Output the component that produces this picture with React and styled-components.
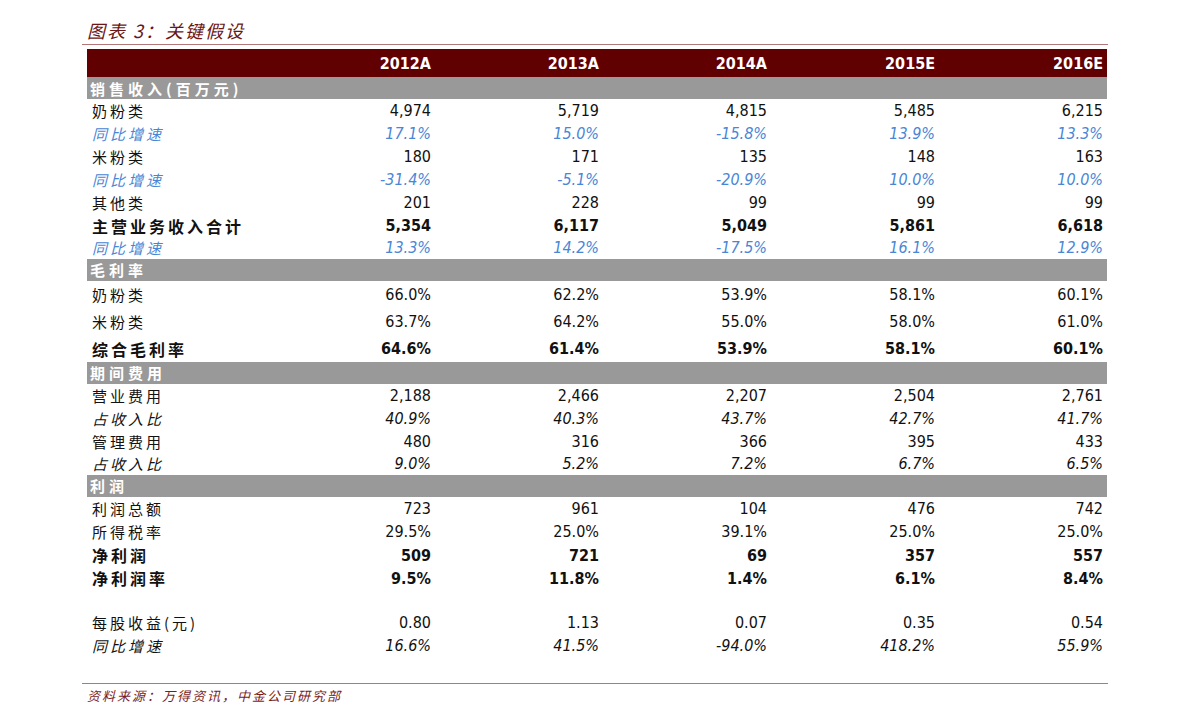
import React from "react";
import styled, { createGlobalStyle } from "styled-components";

const GlobalStyle = createGlobalStyle`
  body {
    margin: 0;
    background: #ffffff;
  }
`;

const Page = styled.div`
  width: 1026px;
  padding: 17px 0 0 82px;
  font-family: "DejaVu Sans Condensed", "DejaVu Sans", sans-serif;
`;

const Title = styled.div`
  height: 27px;
  padding-left: 5px;
  font-family: "Noto Sans CJK SC", sans-serif;
  font-style: italic;
  font-size: 18px;
  line-height: 27px;
  letter-spacing: 2px;
  color: #6b1616;
  border-bottom: 1px solid #b27878;
`;

const Table = styled.div`
  margin: 4px 0 0 5px;
  width: 1020px;
`;

const Row = styled.div`
  display: grid;
  grid-template-columns: 180px repeat(5, 168px);
  align-items: center;
  padding-top: ${(p) => (p.$bg ? 0 : 1)}px;
  box-sizing: border-box;
  height: ${(p) => p.$h || 22.8}px;
  background: ${(p) => p.$bg || "transparent"};
`;

const HeaderCell = styled.div`
  text-align: right;
  padding-right: 4px;
  font-weight: bold;
  font-size: 16px;
  color: #ffffff;
`;

const SectionLabel = styled.div`
  grid-column: 1 / -1;
  padding-left: 3px;
  font-family: "Noto Sans CJK SC", sans-serif;
  font-size: 15px;
  font-weight: bold;
  letter-spacing: 4px;
  color: #ffffff;
`;

const Label = styled.div`
  padding-left: 5px;
  font-family: "Noto Sans CJK SC", sans-serif;
  font-size: ${(p) => (p.$bold ? 16 : 15)}px;
  font-weight: ${(p) => (p.$bold ? "bold" : "normal")};
  font-style: ${(p) => (p.$italic ? "italic" : "normal")};
  letter-spacing: 3px;
  color: ${(p) => (p.$blue ? "#4a86d6" : "#111111")};
  white-space: nowrap;
`;

const Value = styled.div`
  text-align: right;
  padding-right: 4px;
  font-size: 16px;
  font-weight: ${(p) => (p.$bold ? "bold" : "normal")};
  font-style: ${(p) => (p.$italic ? "italic" : "normal")};
  color: ${(p) => (p.$blue ? "#4a86d6" : "#111111")};
`;

const Footer = styled.div`
  margin-top: 27px;
  border-top: 1px solid #b27878;
  padding: 2px 0 0 5px;
  font-family: "Noto Sans CJK SC", sans-serif;
  font-style: italic;
  font-size: 13px;
  letter-spacing: 2px;
  color: #7a1c1c;
`;

const years = ["2012A", "2013A", "2014A", "2015E", "2016E"];

const sections = [
  {
    title: "销售收入(百万元)",
    rows: [
      { label: "奶粉类", values: ["4,974", "5,719", "4,815", "5,485", "6,215"] },
      { label: "同比增速", kind: "growth", values: ["17.1%", "15.0%", "-15.8%", "13.9%", "13.3%"] },
      { label: "米粉类", values: ["180", "171", "135", "148", "163"] },
      { label: "同比增速", kind: "growth", values: ["-31.4%", "-5.1%", "-20.9%", "10.0%", "10.0%"] },
      { label: "其他类", values: ["201", "228", "99", "99", "99"] },
      { label: "主营业务收入合计", kind: "bold", values: ["5,354", "6,117", "5,049", "5,861", "6,618"] },
      { label: "同比增速", kind: "growth", values: ["13.3%", "14.2%", "-17.5%", "16.1%", "12.9%"] },
    ],
  },
  {
    title: "毛利率",
    height: 27,
    rows: [
      { label: "奶粉类", values: ["66.0%", "62.2%", "53.9%", "58.1%", "60.1%"] },
      { label: "米粉类", values: ["63.7%", "64.2%", "55.0%", "58.0%", "61.0%"] },
      { label: "综合毛利率", kind: "bold", values: ["64.6%", "61.4%", "53.9%", "58.1%", "60.1%"] },
    ],
  },
  {
    title: "期间费用",
    rows: [
      { label: "营业费用", values: ["2,188", "2,466", "2,207", "2,504", "2,761"] },
      { label: "占收入比", kind: "italic", values: ["40.9%", "40.3%", "43.7%", "42.7%", "41.7%"] },
      { label: "管理费用", values: ["480", "316", "366", "395", "433"] },
      { label: "占收入比", kind: "italic", values: ["9.0%", "5.2%", "7.2%", "6.7%", "6.5%"] },
    ],
  },
  {
    title: "利润",
    rows: [
      { label: "利润总额", values: ["723", "961", "104", "476", "742"] },
      { label: "所得税率", values: ["29.5%", "25.0%", "39.1%", "25.0%", "25.0%"] },
      { label: "净利润", kind: "bold", values: ["509", "721", "69", "357", "557"] },
      { label: "净利润率", kind: "bold", values: ["9.5%", "11.8%", "1.4%", "6.1%", "8.4%"] },
      { label: "", values: ["", "", "", "", ""] },
      { label: "每股收益(元)", values: ["0.80", "1.13", "0.07", "0.35", "0.54"] },
      { label: "同比增速", kind: "italic", values: ["16.6%", "41.5%", "-94.0%", "418.2%", "55.9%"] },
    ],
  },
];

function DataRow({ row, height }) {
  const bold = row.kind === "bold";
  const italic = row.kind === "italic" || row.kind === "growth";
  const blue = row.kind === "growth";
  return (
    <Row $h={height}>
      <Label $bold={bold} $italic={italic} $blue={blue}>
        {row.label}
      </Label>
      {row.values.map((v, i) => (
        <Value key={i} $bold={bold} $italic={italic} $blue={blue}>
          {v}
        </Value>
      ))}
    </Row>
  );
}

export default function App() {
  return (
    <>
      <GlobalStyle />
      <Page>
        <Title>图表 3：关键假设</Title>
        <Table>
          <Row $h={28} $bg="#600000">
            <div />
            {years.map((y) => (
              <HeaderCell key={y}>{y}</HeaderCell>
            ))}
          </Row>
          {sections.map((s) => (
            <React.Fragment key={s.title}>
              <Row $h={22} $bg="#999999">
                <SectionLabel>{s.title}</SectionLabel>
              </Row>
              {s.rows.map((r, i) => (
                <DataRow key={i} row={r} height={s.height} />
              ))}
            </React.Fragment>
          ))}
        </Table>
        <Footer>资料来源：万得资讯，中金公司研究部</Footer>
      </Page>
    </>
  );
}
